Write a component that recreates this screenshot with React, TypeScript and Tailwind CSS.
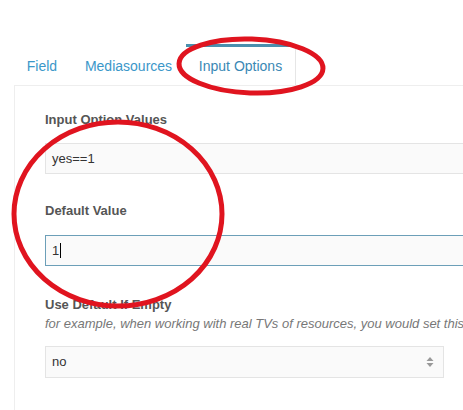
import React from "react";

export default function App() {
  return (
    <div className="relative w-[463px] h-[410px] overflow-hidden bg-white font-['Liberation_Sans',Arial,sans-serif] text-[13px]">
      <div className="h-[44px]" />
      {/* tabs */}
      <div className="flex h-[41px] pl-[13px]">
        <div className="w-[58px] flex items-center justify-center text-[#3b97c9] text-[14px] pt-[3px]">Field</div>
        <div className="w-[115px] flex items-center justify-center text-[#3b97c9] text-[14px] pt-[3px]">Mediasources</div>
        <div className="w-[110px] flex items-center justify-center text-[#3a88b5] text-[14px] border-t-[3px] border-t-[#4a8fae] border-r border-r-[#e6e6e6] bg-white">Input Options</div>
      </div>
      {/* panel */}
      <div className="ml-[14px] border-l border-t border-[#eeeeee] h-[330px] pl-[30px] pt-[26px]">
        <div className="font-bold text-[#555555] text-[13px] leading-[16px]">Input Option Values</div>
        <div className="mt-[15px] h-[31px] w-[440px] border border-[#e4e4e4] bg-[#fafafa] flex items-center pl-[6px] text-[#333]">yes==1</div>
        <div className="mt-[29px] font-bold text-[#555555] text-[13px] leading-[16px]">Default Value</div>
        <div className="mt-[16px] h-[31px] w-[440px] border border-[#6c9fb8] bg-[#fafafa] flex items-center pl-[6px] text-[#333]">
          1<span className="inline-block w-px h-[15px] bg-black ml-px" />
        </div>
        <div className="mt-[31px] font-bold text-[#555555] text-[13px] leading-[16px]">Use Default If Empty</div>
        <div className="mt-[3px] italic text-[#777777] text-[13px] leading-[16px] whitespace-nowrap">for example, when working with real TVs of resources, you would set this</div>
        <div className="mt-[14px] h-[32px] w-[399px] border border-[#e4e4e4] bg-[#fafafa] flex items-center justify-between pl-[6px] pr-[9px] text-[#333]">
          <span>no</span>
          <svg width="8" height="12" viewBox="0 0 8 12">
            <path d="M4 1 L7.5 5 L0.5 5 Z" fill="#999" />
            <path d="M4 11 L7.5 7 L0.5 7 Z" fill="#999" />
          </svg>
        </div>
      </div>
      {/* annotations */}
      <svg className="absolute left-0 top-0 pointer-events-none" width="463" height="410" viewBox="0 0 463 410">
        <ellipse cx="251" cy="66" rx="72" ry="27" fill="none" stroke="#e0141f" strokeWidth="5" transform="rotate(2 251 66)" />
        <ellipse cx="118" cy="214" rx="104" ry="92" fill="none" stroke="#e0141f" strokeWidth="5" />
      </svg>
    </div>
  );
}
